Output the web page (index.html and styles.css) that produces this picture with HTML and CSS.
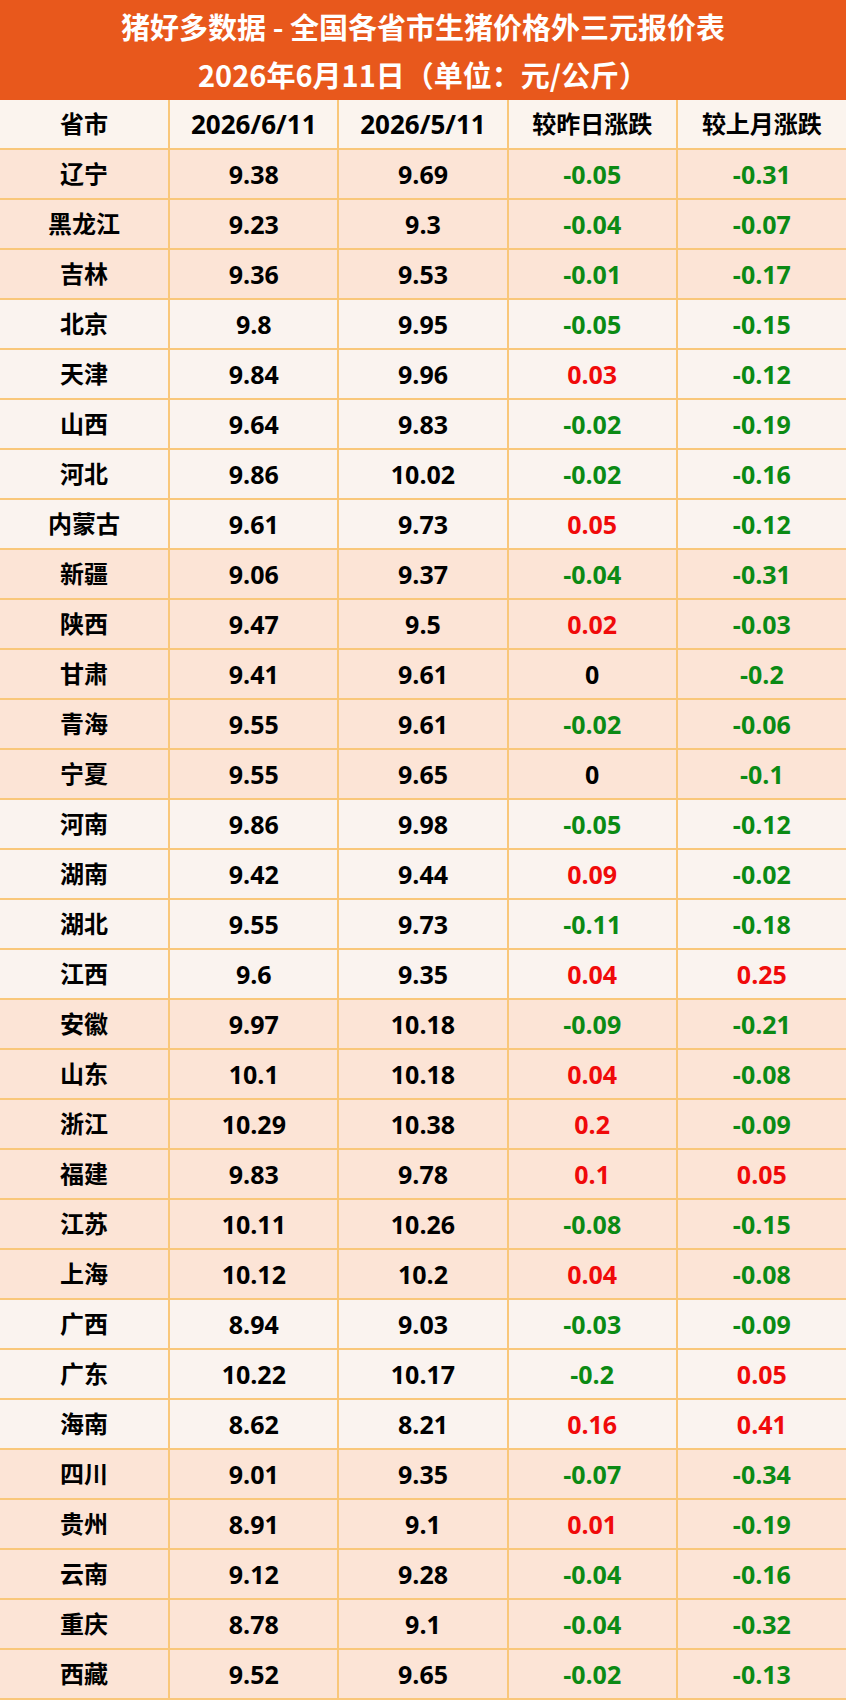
FILE: index.html
```html
<!DOCTYPE html>
<html lang="zh-CN">
<head>
<meta charset="utf-8">
<title>猪好多数据</title>
<link rel="stylesheet" href="styles.css">
</head>
<body>
<div class="sheet">
  <div class="title">
    <div class="title-line">猪好多数据 - 全国各省市生猪价格外三元报价表</div>
    <div class="title-line">2026年6月11日（单位：元/公斤）</div>
  </div>
  <table class="grid">
    <thead>
      <tr class="head"><th>省市</th><th class="date">2026/6/11</th><th class="date">2026/5/11</th><th>较昨日涨跌</th><th>较上月涨跌</th></tr>
    </thead>
    <tbody>
      <tr class="pink"><td>辽宁</td><td>9.38</td><td>9.69</td><td class="dn">-0.05</td><td class="dn">-0.31</td></tr>
      <tr class="pink"><td>黑龙江</td><td>9.23</td><td>9.3</td><td class="dn">-0.04</td><td class="dn">-0.07</td></tr>
      <tr class="pink"><td>吉林</td><td>9.36</td><td>9.53</td><td class="dn">-0.01</td><td class="dn">-0.17</td></tr>
      <tr class="light"><td>北京</td><td>9.8</td><td>9.95</td><td class="dn">-0.05</td><td class="dn">-0.15</td></tr>
      <tr class="light"><td>天津</td><td>9.84</td><td>9.96</td><td class="up">0.03</td><td class="dn">-0.12</td></tr>
      <tr class="light"><td>山西</td><td>9.64</td><td>9.83</td><td class="dn">-0.02</td><td class="dn">-0.19</td></tr>
      <tr class="light"><td>河北</td><td>9.86</td><td>10.02</td><td class="dn">-0.02</td><td class="dn">-0.16</td></tr>
      <tr class="light"><td>内蒙古</td><td>9.61</td><td>9.73</td><td class="up">0.05</td><td class="dn">-0.12</td></tr>
      <tr class="pink"><td>新疆</td><td>9.06</td><td>9.37</td><td class="dn">-0.04</td><td class="dn">-0.31</td></tr>
      <tr class="pink"><td>陕西</td><td>9.47</td><td>9.5</td><td class="up">0.02</td><td class="dn">-0.03</td></tr>
      <tr class="pink"><td>甘肃</td><td>9.41</td><td>9.61</td><td>0</td><td class="dn">-0.2</td></tr>
      <tr class="pink"><td>青海</td><td>9.55</td><td>9.61</td><td class="dn">-0.02</td><td class="dn">-0.06</td></tr>
      <tr class="pink"><td>宁夏</td><td>9.55</td><td>9.65</td><td>0</td><td class="dn">-0.1</td></tr>
      <tr class="light"><td>河南</td><td>9.86</td><td>9.98</td><td class="dn">-0.05</td><td class="dn">-0.12</td></tr>
      <tr class="light"><td>湖南</td><td>9.42</td><td>9.44</td><td class="up">0.09</td><td class="dn">-0.02</td></tr>
      <tr class="light"><td>湖北</td><td>9.55</td><td>9.73</td><td class="dn">-0.11</td><td class="dn">-0.18</td></tr>
      <tr class="light"><td>江西</td><td>9.6</td><td>9.35</td><td class="up">0.04</td><td class="up">0.25</td></tr>
      <tr class="pink"><td>安徽</td><td>9.97</td><td>10.18</td><td class="dn">-0.09</td><td class="dn">-0.21</td></tr>
      <tr class="pink"><td>山东</td><td>10.1</td><td>10.18</td><td class="up">0.04</td><td class="dn">-0.08</td></tr>
      <tr class="pink"><td>浙江</td><td>10.29</td><td>10.38</td><td class="up">0.2</td><td class="dn">-0.09</td></tr>
      <tr class="pink"><td>福建</td><td>9.83</td><td>9.78</td><td class="up">0.1</td><td class="up">0.05</td></tr>
      <tr class="pink"><td>江苏</td><td>10.11</td><td>10.26</td><td class="dn">-0.08</td><td class="dn">-0.15</td></tr>
      <tr class="pink"><td>上海</td><td>10.12</td><td>10.2</td><td class="up">0.04</td><td class="dn">-0.08</td></tr>
      <tr class="light"><td>广西</td><td>8.94</td><td>9.03</td><td class="dn">-0.03</td><td class="dn">-0.09</td></tr>
      <tr class="light"><td>广东</td><td>10.22</td><td>10.17</td><td class="dn">-0.2</td><td class="up">0.05</td></tr>
      <tr class="light"><td>海南</td><td>8.62</td><td>8.21</td><td class="up">0.16</td><td class="up">0.41</td></tr>
      <tr class="pink"><td>四川</td><td>9.01</td><td>9.35</td><td class="dn">-0.07</td><td class="dn">-0.34</td></tr>
      <tr class="pink"><td>贵州</td><td>8.91</td><td>9.1</td><td class="up">0.01</td><td class="dn">-0.19</td></tr>
      <tr class="pink"><td>云南</td><td>9.12</td><td>9.28</td><td class="dn">-0.04</td><td class="dn">-0.16</td></tr>
      <tr class="pink"><td>重庆</td><td>8.78</td><td>9.1</td><td class="dn">-0.04</td><td class="dn">-0.32</td></tr>
      <tr class="pink"><td>西藏</td><td>9.52</td><td>9.65</td><td class="dn">-0.02</td><td class="dn">-0.13</td></tr>
    </tbody>
  </table>
</div>
</body>
</html>
```
FILE: styles.css
```css
html, body {
  margin: 0;
  padding: 0;
  background: #ffffff;
}
.sheet {
  width: 846px;
  font-family: "Open Sans", "Noto Sans CJK SC", sans-serif;
  font-weight: 700;
}
.title {
  background: #e8581c;
  color: #ffffff;
  height: 100px;
  display: flex;
  flex-direction: column;
  justify-content: center;
}
.title-line {
  height: 48px;
  line-height: 48px;
  text-align: center;
  font-size: 29px;
  font-family: "Noto Sans CJK SC", sans-serif;
  font-weight: 700;
}
.grid {
  width: 846px;
  border-collapse: collapse;
  table-layout: fixed;
}
.grid th, .grid td {
  border: 2px solid #f9c77a;
  height: 48px;
  padding: 0;
  text-align: center;
  vertical-align: middle;
  font-size: 25px;
  font-weight: 700;
  color: #000000;
  line-height: 1;
}
.grid th {
  font-size: 24px;
  font-family: "Open Sans", "Noto Sans CJK SC", sans-serif;
}
.grid th.date {
  font-size: 26px;
}
.grid td:first-child {
  font-size: 24px;
}
.grid tr > :first-child {
  border-left: none;
}
.grid tr > :last-child {
  border-right: none;
}
.grid thead th {
  border-top: none;
}
.head {
  background: #fbf4ee;
}
.pink {
  background: #fce4d6;
}
.light {
  background: #faf3ef;
}
.grid td.dn {
  color: #0b8a14;
}
.grid td.up {
  color: #f00a0a;
}
```
